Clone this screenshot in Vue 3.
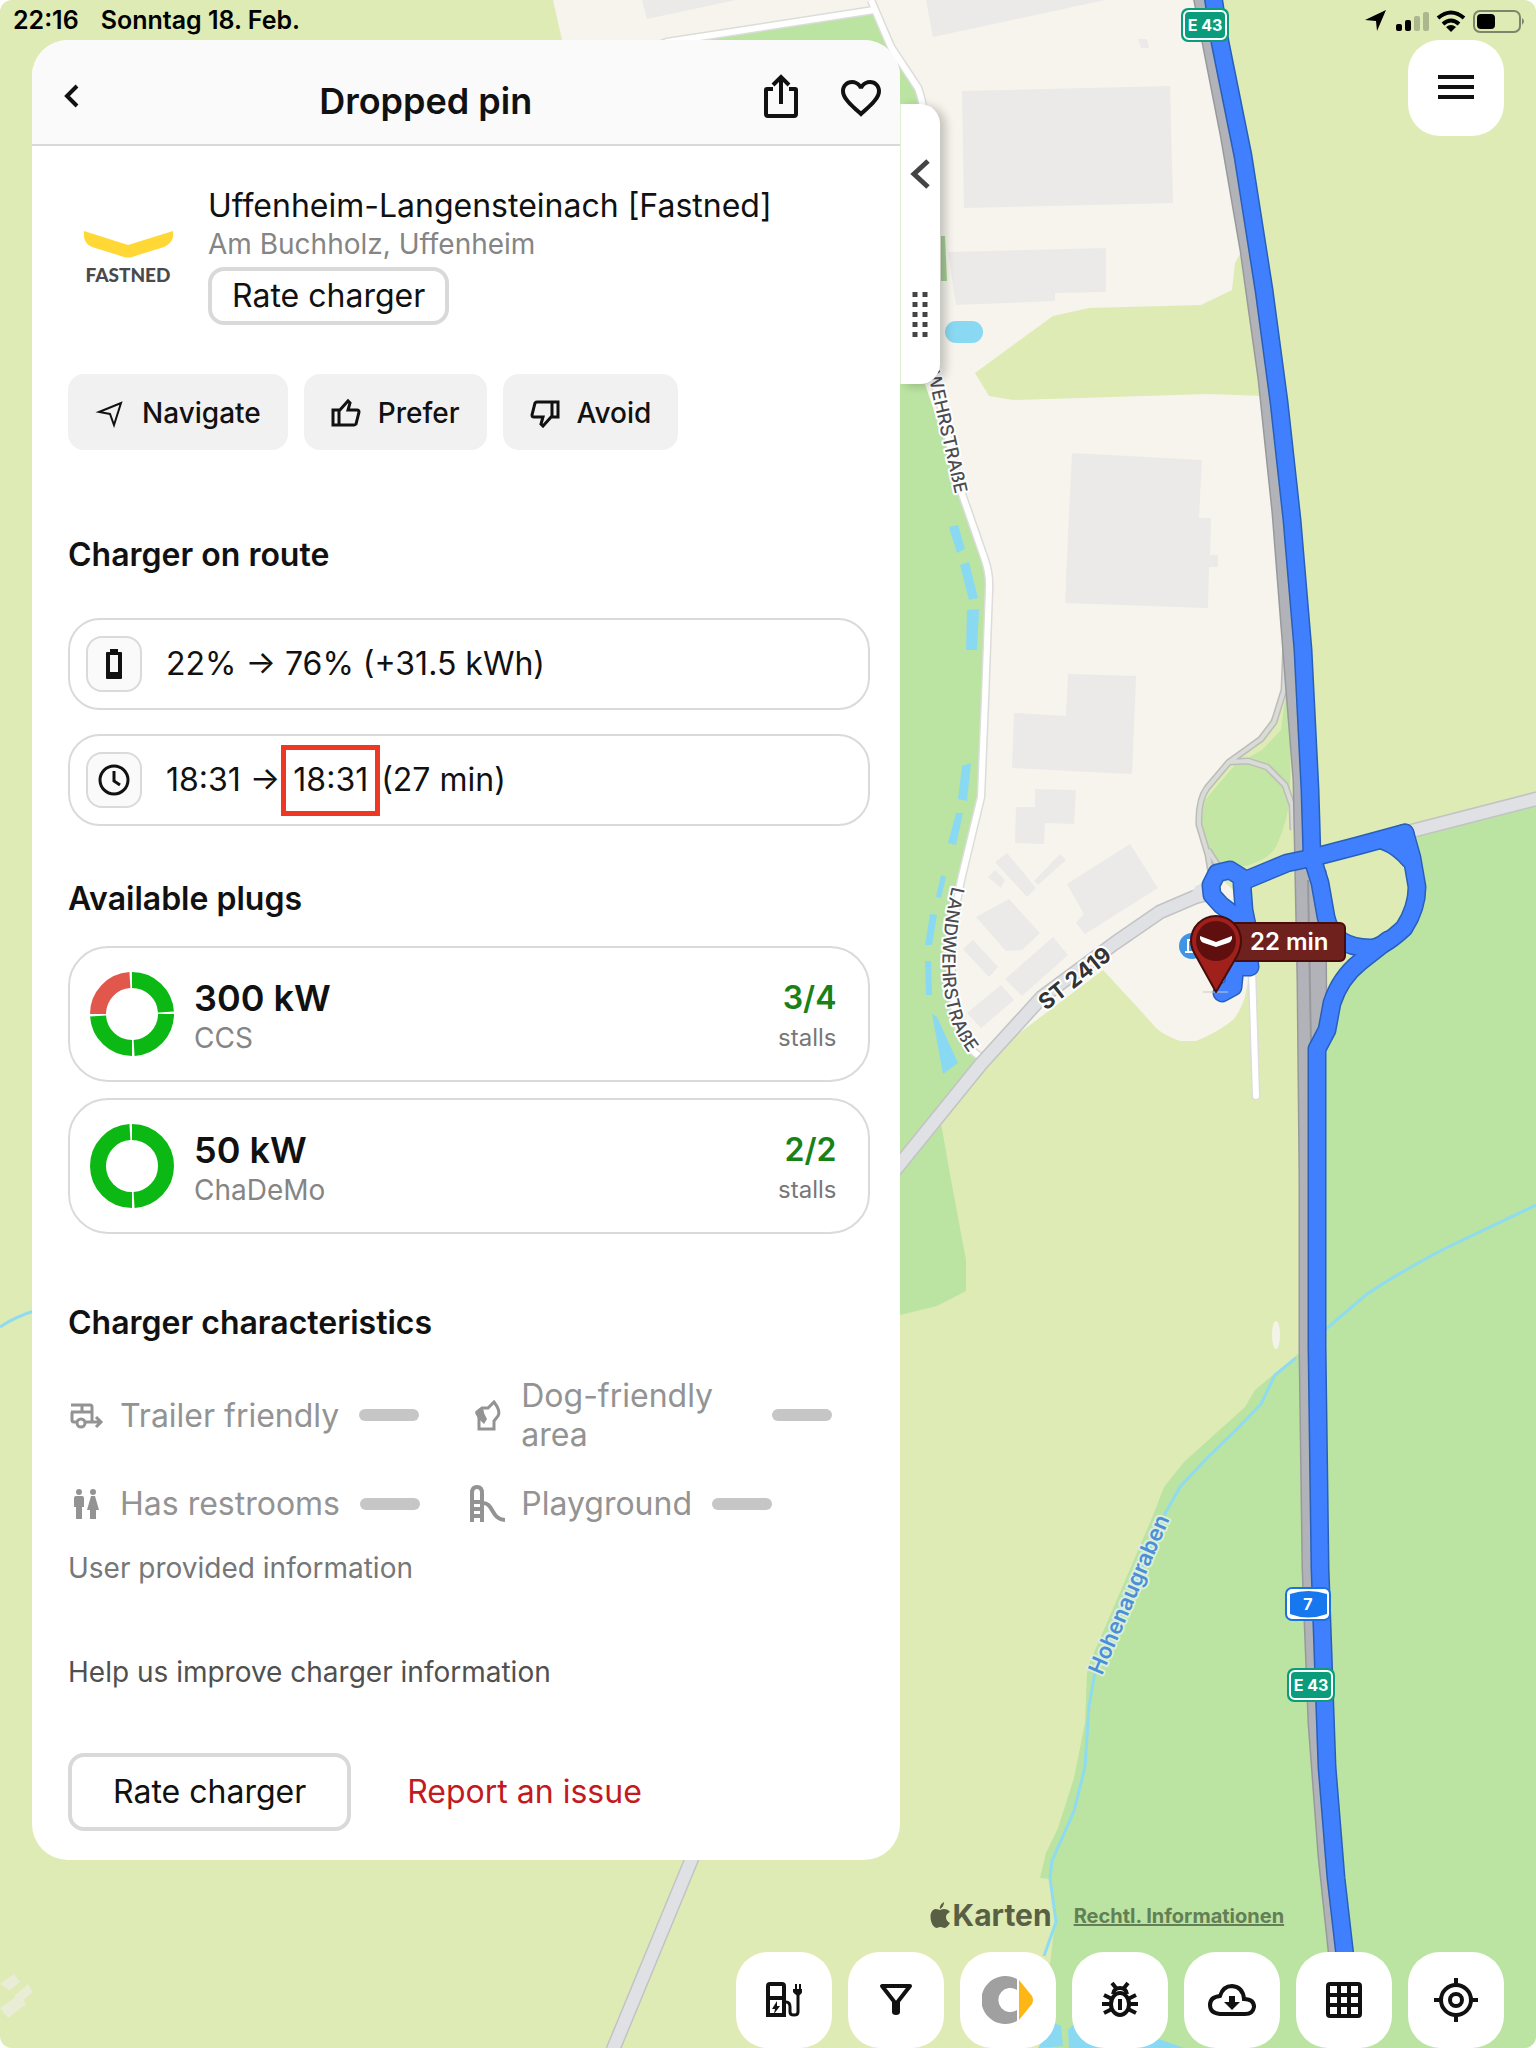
<script setup>
    import { ref } from 'vue';

    // 当前充电站
    const station = {
        name: 'Uffenheim-Langensteinach [Fastned]',
        address: 'Am Buchholz, Uffenheim'
    }

    // segments: true = stall is free, drawn clockwise from the top
    const plugs = [
        { power: '300 kW', type: 'CCS', segments: [true, true, true, false] },
        { power: '50 kW', type: 'ChaDeMo', segments: [true, true] }
    ]

    const features = [
        { icon: 'trailer', text: 'Trailer friendly' },
        { icon: 'dog', text: 'Dog-friendly area' },
        { icon: 'restroom', text: 'Has restrooms' },
        { icon: 'playground', text: 'Playground' }
    ]

    const tools = [
        { icon: 'charger', label: 'Chargers' },
        { icon: 'filter', label: 'Filter' },
        { icon: 'car', label: 'Vehicle' },
        { icon: 'bug', label: 'Report a bug' },
        { icon: 'cloud', label: 'Download' },
        { icon: 'grid', label: 'Layers' },
        { icon: 'locate', label: 'My location' }
    ]

    // buildings and ponds on the map, as polygon points
    const buildings = [
        '642,0 647,19 736,0',
        '926,0 933,37 1105,0',
        '962,91 1170,86 1173,203 964,208',
        '948,252 1106,248 1106,292 1055,293 1055,301 956,305',
        '1138,39 1147,39 1149,48 1141,48',
        '1072,453 1202,460 1199,518 1211,518 1210,555 1218,555 1218,567 1209,567 1208,608 1065,603 1069,513',
        '1068,674 1136,676 1132,774 1012,768 1014,713 1066,716',
        '1035,789 1076,790 1074,824 1045,823 1044,844 1015,843 1016,807 1035,807',
        '1130,844 1158,888 1085,934 1076,923 1084,914 1067,884',
        '1007,853 1036,888 1027,897 995,862',
        '1060,854 1066,860 1038,885 1034,881',
        '995,870 1005,880 1001,888 988,877',
        '1009,899 1040,933 1022,950 1006,951 976,917',
        '973,940 998,967 989,977 963,949',
        '1053,937 1068,955 1022,996 1005,979',
        '1001,985 1014,1000 981,1028 967,1013'
    ]
    const ponds = [
        '949,527 958,525 965,549 957,553',
        '960,565 969,562 978,598 969,600',
        '967,610 979,609 977,650 966,650',
        '962,766 971,763 967,801 958,799',
        '956,813 963,813 956,845 948,843',
        '941,875 946,877 941,898 936,897',
        '930,914 937,915 932,945 925,945',
        '925,961 931,961 932,995 926,995',
        '932,1014 937,1017 958,1063 943,1074',
        '1038,2048 1054,2023 1061,2026 1063,2046',
        '1069,2048 1068,2030 1074,2024 1150,2036 1184,2048'
    ]
    const routePath = 'M1213 -4 L1220 42 L1243 156 L1264 290 L1279 402 L1292 520 L1303 650 L1310 790 L1312 857 L1320 883 L1326 917 C1330 936 1345 948 1370 948 C1378 948 1388 943 1404 928 Q1417 908 1417 887 L1412 858 L1405 833 L1357 846 L1311 858 L1287 863 L1246 880 L1230 870 L1217 873 L1211 885 L1212 895 L1221 905 L1238 918 L1247 942 L1250 967 L1235 967 L1233 987 L1222 993'
    const loopPath = 'M1242 884 L1244 910 L1250 940'
    const cornerPath = 'M1405 833 L1384 841 Q1398 846 1410 860'
    const exitPath = 'M1388 940 L1360 962 Q1340 978 1332 1003 L1327 1030 L1317 1049 L1317 1346 L1320 1568 L1327 1767 L1336 1878 L1346 1965'
    const routes = [routePath, loopPath, cornerPath, exitPath]

    const liked = ref(false)

    function freeStalls(plug) {
        return plug.segments.filter(s => s).length
    }
    // 圆环分段：圆周按 100 计算，每段之间留 1 的间隔
    function segmentDash(plug) {
        const len = 100 / plug.segments.length
        return `${len - 1} ${101 - len}`
    }
</script>

<template>
    <div class="screen">
        <svg class="map" viewBox="0 0 1536 2048" preserveAspectRatio="xMaxYMin slice" aria-hidden="true">
            <rect width="1536" height="2048" fill="#deebb5"/>
            <!-- built-up area -->
            <path d="M553 0H1198L1208 42L1225 134L1245 250L1263 379L1277 513L1288 640L1284 695L1261 737L1229 760L1204 790L1198 817L1208 847L1216 875L1245 900L1252 960L1245 997Q1240 1012 1233 1020Q1215 1034 1196 1041H1180Q1165 1036 1156 1028L1140 1010L1103 970L981 1062L900 1000V104L562 40Z" fill="#f6f4ec"/>
            <path d="M1240 254L1235 263L1232 290L1201 305L1089 308L1053 316L975 373L989 396L1013 400L1208 394L1264 396Z" fill="#deebb5"/>
            <!-- woods and meadows -->
            <path d="M667 40L873 8L924 104L925 384L961 491L989 585L985 700L981 797L961 880L951 940L953 1005L965 1040L981 1057L941 1123L951 1180L966 1260V1291L937 1306L900 1315L860 1320V300L700 60Z" fill="#bbe3a1"/>
            <path d="M941 236H945L947 281H941Z" fill="#a5d195"/>
            <path d="M1286 690L1281 730L1262 750L1235 765L1205 800L1199 830L1212 865L1240 867Q1268 862 1277 845Q1288 820 1290 795L1291 690Z" fill="#c3e6a5"/>
            <path d="M1412 838L1536 806V2048H1040L1055 1922L1050 1879L1040 1878L1046 1853L1058 1828L1074 1778L1085 1723L1087 1673L1090 1662L1152 1518L1164 1487L1184 1462L1245 1407L1255 1390L1298 1354L1317 1340V1050L1345 985L1400 940L1420 890Z" fill="#bbe3a1"/>
            <ellipse cx="1276" cy="1335" rx="4" ry="14" fill="#f4f3ea"/>
            <path d="M0 1984l14-10 6 8-10 8zM14 1996l14-12 5 8-12 10zM0 2008l20-14 6 10-18 14z" fill="#e9edd6"/>
            <polygon v-for="(item,index) in buildings" :key="index" :points="item" fill="#ebeae8"/>
            <polygon v-for="(item,index) in ponds" :key="'p' + index" :points="item" fill="#8ad9f3"/>
            <rect x="945" y="321" width="38" height="22" rx="11" fill="#8ad9f3"/>
            <!-- streams -->
            <g fill="none" stroke="#8fdcf0" stroke-width="3">
                <path d="M0 1327Q14 1317 40 1309"/>
                <path d="M1296 1358L1275 1375L1261 1404L1237 1429L1208 1457L1180 1487L1166 1512L1095 1673L1089 1706L1085 1767L1074 1811L1052 1861L1050 1878L1056 1922L1044 1956"/>
                <path d="M1326 1329L1367 1294Q1400 1272 1444 1249L1536 1205"/>
            </g>
            <!-- minor roads -->
            <g fill="none" stroke-linejoin="round">
                <path d="M640 52L667 42L874 10M871 0L876 12L891 47L918 88Q926 110 928 150L934 380L961 491L985 560Q990 575 989 590L985 700L981 797L961 880Q946 950 955 1013Q960 1045 981 1057" stroke="#dcdcda" stroke-width="9"/>
                <path d="M640 52L667 42L874 10M871 0L876 12L891 47L918 88Q926 110 928 150L934 380L961 491L985 560Q990 575 989 590L985 700L981 797L961 880Q946 950 955 1013Q960 1045 981 1057" stroke="#fff" stroke-width="6"/>
                <path d="M1252 970L1256 1096" stroke="#dcdcda" stroke-width="9" stroke-linecap="round"/>
                <path d="M1252 970L1256 1096" stroke="#fff" stroke-width="6" stroke-linecap="round"/>
                <path d="M1286 640L1284 690L1274 722L1261 739L1229 762L1207 788Q1198 800 1199 825L1208 855L1212 880M1229 762L1248 761L1267 767L1285 785L1292 805L1293 830M1208 850L1222 872" stroke="#bcbcba" stroke-width="7"/>
                <path d="M1286 640L1284 690L1274 722L1261 739L1229 762L1207 788Q1198 800 1199 825L1208 855L1212 880M1229 762L1248 761L1267 767L1285 785L1292 805L1293 830M1208 850L1222 872" stroke="#d9dbd6" stroke-width="4"/>
                <path d="M880 1188L900 1164L981 1064L1042 997L1115 943L1160 912L1195 897L1215 892M1400 834L1540 798M693 1856L612 2052" stroke="#c2c3c4" stroke-width="15"/>
                <path d="M880 1188L900 1164L981 1064L1042 997L1115 943L1160 912L1195 897L1215 892M1400 834L1540 798M693 1856L612 2052" stroke="#e0e1e4" stroke-width="12"/>
                <path d="M1188 898L1196 886L1214 878L1216 900Z" fill="#e0e1e4"/>
                <!-- motorway -->
                <path d="M1202 -4L1211 42L1229 134L1249 250L1267 379L1281 513L1294 680L1302 780L1306 980L1308 1180V1350L1311 1568L1317 1723L1327 1856L1338 1960M1317 870L1318 1045" stroke="#98999d" stroke-width="19"/>
                <path d="M1202 -4L1211 42L1229 134L1249 250L1267 379L1281 513L1294 680L1302 780L1306 980L1308 1180V1350L1311 1568L1317 1723L1327 1856L1338 1960M1317 870L1318 1045" stroke="#b2b3b8" stroke-width="16"/>
                <path d="M1308 880L1311 1045" stroke="#97989c" stroke-width="2"/>
            </g>
            <!-- planned route -->
            <g fill="none" stroke-linejoin="round" stroke-linecap="round">
                <path v-for="(d,index) in routes" :key="'c' + index" :d="d" stroke="#285fb9" stroke-width="19"/>
                <path v-for="(d,index) in routes" :key="'r' + index" :d="d" stroke="#4080ff" stroke-width="16"/>
            </g>
            <!-- street names -->
            <path id="street1" d="M902 296L930 384L961 520" fill="none"/>
            <path id="street2" d="M952 886Q935 960 948 1010Q954 1036 976 1062" fill="none"/>
            <path id="street3" d="M1046 1011L1124 949" fill="none"/>
            <path id="stream" d="M1102 1676L1178 1500" fill="none"/>
            <g class="names">
                <text class="street"><textPath href="#street1" startOffset="32">LANDWEHRSTRAßE</textPath></text>
                <text class="street"><textPath href="#street2">LANDWEHRSTRAßE</textPath></text>
                <text class="road"><textPath href="#street3">ST 2419</textPath></text>
                <text class="water"><textPath href="#stream">Hohenaugraben</textPath></text>
            </g>
            <!-- road shields -->
            <g class="shield">
                <rect x="1181" y="8" width="48" height="34" rx="7" fill="#0b9d7b"/>
                <rect x="1184" y="11" width="42" height="28" rx="5" fill="none" stroke="#fff" stroke-width="2"/>
                <text x="1205" y="31">E 43</text>
                <rect x="1287" y="1668" width="48" height="34" rx="7" fill="#0b9d7b"/>
                <rect x="1290" y="1671" width="42" height="28" rx="5" fill="none" stroke="#fff" stroke-width="2"/>
                <text x="1311" y="1691">E 43</text>
                <rect x="1285" y="1587" width="46" height="34" rx="7" fill="#1a73e0"/>
                <rect x="1287" y="1589" width="42" height="30" rx="5" fill="#fff"/>
                <path d="M1290 1594Q1308 1588 1327 1594V1614Q1308 1621 1290 1614Z" fill="#1677ee"/>
                <text x="1308" y="1610">7</text>
            </g>
            <!-- charger pin -->
            <circle cx="1192" cy="946" r="13" fill="#3f94e6"/>
            <path d="M1187 940H1194M1188 941V951M1185 952H1194" stroke="#fff" stroke-width="2"/>
            <path d="M1203 992H1228" stroke="#c9c7c2" stroke-width="1"/>
            <rect x="1220" y="923" width="125" height="38" rx="5" fill="#6f211d" stroke="#470c0b" stroke-width="2"/>
            <path d="M1216 992L1196 956Q1191 948 1191 941A25 25 0 0 1 1241 941Q1241 948 1237 956Z" fill="#a0201b" stroke="#470c0b" stroke-width="2" stroke-linejoin="round"/>
            <circle cx="1216" cy="941" r="20" fill="#5f100e"/>
            <path d="M1200 936L1216 942L1232 936V939Q1231 942 1228 943L1216 947L1204 943Q1201 942 1200 939Z" fill="#fff"/>
            <text class="eta" x="1250" y="950">22 min</text>
        </svg>

        <header class="status">
            <span>22:16</span>
            <span>Sonntag 18. Feb.</span>
            <svg class="status-icons" width="164" height="28" viewBox="0 0 164 28" aria-hidden="true">
                <path d="M1 14L22 4L13 25L12 15Z"/>
                <rect x="32" y="18" width="6" height="7" rx="2"/>
                <rect x="41" y="14" width="6" height="11" rx="2"/>
                <rect x="50" y="10" width="6" height="15" rx="2" opacity=".22"/>
                <rect x="59" y="6" width="6" height="19" rx="2" opacity=".22"/>
                <g fill="none" stroke="#000" stroke-width="4">
                    <path d="M74 12Q87 1 100 12"/>
                    <path d="M79 18Q87 11 95 18"/>
                </g>
                <path d="M87 26L82 21Q87 17 92 21Z"/>
                <rect x="110" y="5" width="46" height="21" rx="6" fill="none" stroke="#7d8668" stroke-width="2"/>
                <rect x="113" y="8" width="18" height="15" rx="4"/>
                <path d="M158 12Q162 15 158 19Z" fill="#7d8668"/>
            </svg>
        </header>

        <div class="stage">
            <main class="panel">
                <div class="panel-head">
                    <button aria-label="Back">
                        <svg width="30" height="28" viewBox="0 0 30 28"><path d="M17 4L7 14L17 24" fill="none" stroke="#111" stroke-width="4"/></svg>
                    </button>
                    <h1>Dropped pin</h1>
                    <button class="share" aria-label="Share">
                        <svg width="40" height="48" viewBox="0 0 40 48" fill="none" stroke="#111" stroke-width="4">
                            <path d="M12 17H6Q5 17 5 18V42Q5 44 7 44H33Q35 44 35 42V18Q35 17 34 17H28"/>
                            <path d="M20 32V6M12 13L20 5L28 13"/>
                        </svg>
                    </button>
                    <button aria-label="Favourite" :aria-pressed="liked" @click="liked = !liked">
                        <svg width="48" height="48" viewBox="0 0 24 24"><path d="M12.1 18.55L12 18.65L11.89 18.55C7.14 14.24 4 11.39 4 8.5C4 6.5 5.5 5 7.5 5C9.04 5 10.54 6 11.07 7.36H12.93C13.46 6 14.96 5 16.5 5C18.5 5 20 6.5 20 8.5C20 11.39 16.86 14.24 12.1 18.55M16.5 3C14.76 3 13.09 3.81 12 5.08C10.91 3.81 9.24 3 7.5 3C4.42 3 2 5.41 2 8.5C2 12.27 5.4 15.36 10.55 20.03L12 21.35L13.45 20.03C18.6 15.36 22 12.27 22 8.5C22 5.41 19.58 3 16.5 3Z" transform="translate(0 1)" fill="#111"/></svg>
                    </button>
                </div>

                <div class="panel-body">
                    <section class="station">
                        <div class="brand">
                            <svg width="92" height="30" viewBox="0 0 92 30" aria-hidden="true"><path d="M2 1L46 15L91 1V7Q90 13 82 17L53 26Q46 29 39 26L10 17Q3 14 2 7Z" fill="#ffd836"/></svg>
                            <span>FASTNED</span>
                        </div>
                        <div>
                            <h2>{{station.name}}</h2>
                            <p class="address">{{station.address}}</p>
                            <button class="outlined small">Rate charger</button>
                        </div>
                    </section>

                    <div class="actions">
                        <button class="action">
                            <svg width="30" height="30" viewBox="0 0 30 30"><path d="M4 14L26 5L19 27L15 16Z" fill="none" stroke="#111" stroke-width="2"/></svg>
                            Navigate
                        </button>
                        <button class="action">
                            <svg width="30" height="30" viewBox="0 0 30 30" fill="none" stroke="#111" stroke-width="3"><path d="M2 12H8V27H2ZM8 13L17 3L19 5L17 12H26Q28 12 28 14L25 26Q24 27 23 27H8"/></svg>
                            Prefer
                        </button>
                        <button class="action">
                            <svg width="30" height="30" viewBox="0 0 30 30" fill="none" stroke="#111" stroke-width="3"><path d="M28 19H22V4H28ZM22 18L13 28L11 26L13 19H4Q2 19 2 17L5 5Q6 4 7 4H22"/></svg>
                            Avoid
                        </button>
                    </div>

                    <section class="on-route">
                        <h3>Charger on route</h3>
                        <div class="info">
                            <span class="badge">
                                <svg width="28" height="34" viewBox="0 0 28 34"><path d="M10 2H18V5H21Q22 5 22 6V31Q22 32 21 32H7Q6 32 6 31V6Q6 5 7 5H10ZM10 8V25H18V8Z" fill="#111" fill-rule="evenodd"/></svg>
                            </span>
                            <span>22% → 76% (+31.5 kWh)</span>
                        </div>
                        <div class="info">
                            <span class="badge">
                                <svg width="34" height="34" viewBox="0 0 34 34" fill="none" stroke="#111" stroke-width="3"><circle cx="17" cy="17" r="14"/><path d="M17 8V18L23 22"/></svg>
                            </span>
                            <span>18:31 → <span class="marked">18:31</span> (27 min)</span>
                        </div>
                    </section>

                    <section class="plugs">
                        <h3>Available plugs</h3>
                        <div v-for="plug in plugs" :key="plug.type" class="plug">
                            <svg width="84" height="84" viewBox="0 0 84 84" aria-hidden="true">
                                <circle v-for="(free,index) in plug.segments" :key="index" cx="42" cy="42" r="34" fill="none"
                                    :stroke="free ? '#0cb814' : '#e2574c'" stroke-width="16" pathLength="100"
                                    :stroke-dasharray="segmentDash(plug)" :stroke-dashoffset="-index * 100 / plug.segments.length"
                                    transform="rotate(-90 42 42)"/>
                            </svg>
                            <div class="plug-name">
                                <strong>{{plug.power}}</strong>
                                <span>{{plug.type}}</span>
                            </div>
                            <div class="stalls">
                                <strong>{{freeStalls(plug)}}/{{plug.segments.length}}</strong>
                                <span>stalls</span>
                            </div>
                        </div>
                    </section>

                    <section class="features">
                        <h3>Charger characteristics</h3>
                        <ul>
                            <li v-for="item in features" :key="item.icon">
                                <svg width="36" height="38" viewBox="0 0 36 38" fill="none" stroke="#939393" stroke-width="3">
                                    <path v-if="item.icon === 'trailer'" d="M3 9H22Q24 9 24 11V26H17M3 16H24M14 9V16M4 16V24Q4 26 6 26H9M17 27A4 4 0 1 1 9 27A4 4 0 1 1 17 27M24 26H32M28 21L33 26L28 31"/>
                                    <g v-else-if="item.icon === 'dog'">
                                        <path d="M10 33V21L8 16L13 12H19L25 6Q32 15 29 20L25 25V33Z"/>
                                        <path d="M6 17L11 12Q15 12 15 17L18 23L15 28L9 22Z" fill="#939393" stroke="none"/>
                                    </g>
                                    <path v-else-if="item.icon === 'restroom'" d="M8 7a3 3 0 1 1 6 0a3 3 0 1 1-6 0M22 7a3 3 0 1 1 6 0a3 3 0 1 1-6 0M8 11H14Q16 11 16 13V22H14V34H8V22H6V13Q6 11 8 11M23 11H27L31 25H28V34H22V25H19Z" fill="#939393" stroke="none"/>
                                    <path v-else stroke-width="4" d="M3 37V8Q3 2 8 2Q13 2 13 8V37M3 17H13M3 24H13M3 31H13M13 18C25 17 21 34 36 35"/>
                                </svg>
                                <span>{{item.text}}</span>
                                <i class="dash"></i>
                            </li>
                        </ul>
                        <p class="source">User provided information</p>
                    </section>

                    <section class="feedback">
                        <p>Help us improve charger information</p>
                        <div class="feedback-row">
                            <button class="outlined">Rate charger</button>
                            <button class="report">Report an issue</button>
                        </div>
                    </section>
                </div>

                <button class="handle" aria-label="Collapse panel">
                    <svg width="24" height="32" viewBox="0 0 24 32"><path d="M20 3L6 16L20 29" fill="none" stroke="#444" stroke-width="5"/></svg>
                    <svg width="16" height="46" viewBox="0 0 16 46"><path d="M3 0V46M13 0V46" stroke="#444" stroke-width="5" stroke-dasharray="5 5"/></svg>
                </button>
            </main>

            <button class="tool menu" aria-label="Menu">
                <svg width="36" height="26" viewBox="0 0 36 26"><path d="M0 3H36M0 13H36M0 23H36" stroke="#111" stroke-width="4"/></svg>
            </button>
        </div>

        <footer>
            <div class="credits">
                <span class="maps">
                    <svg width="21" height="26" viewBox="0 0 21 26" aria-hidden="true"><path d="M14 0Q14 5 10 7Q9 3 14 0M10 8Q12 7 14 7Q18 7 20 10Q16 12 16 15Q16 19 20 21Q17 26 14 26Q12 25 10 25Q9 25 7 26Q3 26 1 19Q-1 9 5 7Q7 7 10 8Z" fill="#585f45"/></svg>
                    Karten
                </span>
                <a href="#">Rechtl. Informationen</a>
            </div>
            <nav class="toolbar">
                <button v-for="tool in tools" :key="tool.icon" class="tool" :aria-label="tool.label">
                    <svg width="52" height="52" viewBox="0 0 52 52" fill="none" stroke="#111" stroke-width="4">
                        <g v-if="tool.icon === 'charger'">
                            <path d="M10 41V12Q10 10 12 10H24Q26 10 26 12V41M9 24H27M8 41H28"/>
                            <path d="M28 28Q32 28 32 33V38Q32 41 36 41Q40 41 40 38V20" stroke-width="3"/>
                            <path d="M19 27L14 35H17L16 40L22 32H19ZM35 15H37V10H39V15H41V10H43V15H44V18Q44 20 40 22Q36 20 35 18Z" fill="#111" stroke="none"/>
                        </g>
                        <g v-else-if="tool.icon === 'filter'">
                            <path d="M12 12H40L26 30Z" stroke-linejoin="round"/>
                            <path d="M22 27H30V38Q30 41 26 41Q22 41 22 38Z" fill="#111" stroke="none"/>
                        </g>
                        <g v-else-if="tool.icon === 'car'" stroke="none">
                            <path d="M35 5A24 24 0 1 0 35 47V36A12 12 0 1 1 35 16Z" fill="#a0a0a0"/>
                            <path d="M37 6L50 22Q52 26 50 30L37 46Z" fill="#fdb614"/>
                        </g>
                        <g v-else-if="tool.icon === 'bug'">
                            <ellipse cx="26" cy="30" rx="9" ry="11"/>
                            <path d="M19 20Q20 14 26 14Q32 14 33 20M18 9L22 14M34 9L30 14M8 30H16M36 30H44M10 21L18 25M42 21L34 25M10 39L18 35M42 39L34 35M26 25V36"/>
                        </g>
                        <g v-else-if="tool.icon === 'cloud'">
                            <path d="M14 40Q4 39 4 31Q4 23 14 22Q17 12 26 12Q37 13 38 25Q48 25 48 33Q47 40 39 40Z"/>
                            <path d="M23 22H29V28H34L26 36L18 28H23Z" fill="#111" stroke="none"/>
                        </g>
                        <path v-else-if="tool.icon === 'grid'" d="M12 10H40Q42 10 42 12V40Q42 42 40 42H12Q10 42 10 40V12Q10 10 12 10M10 21H42M10 31H42M21 10V42M31 10V42"/>
                        <g v-else>
                            <circle cx="26" cy="26" r="15"/>
                            <circle cx="26" cy="26" r="6"/>
                            <path d="M26 4V12M26 40V48M4 26H12M40 26H48"/>
                        </g>
                    </svg>
                </button>
            </nav>
        </footer>
    </div>
</template>

<style>
    body{
        margin: 0;
        background: #fff;
    }
</style>

<style scoped>
    .screen{
        position: relative;
        display: flex;
        flex-direction: column;
        min-height: 100vh;
        overflow: hidden;
        border-radius: 12px;
        color: #111;
        font-family: Inter, "Liberation Sans", sans-serif;
        font-size: 32px;
        line-height: 40px;
    }
    .map{
        position: absolute;/* 地图铺在最底层 */
        inset: 0;
        width: 100%;
        height: 100%;
    }
    .names text{
        stroke: #fff;
        stroke-width: 4px;
        stroke-linejoin: round;
        paint-order: stroke;
    }
    .names .street{
        fill: #4c4c50;
        font-size: 18px;
        font-weight: 500;
    }
    .names .road{
        fill: #333;
        font-size: 22px;
        font-weight: 700;
    }
    .names .water{
        fill: #4d8fd6;
        stroke: #d9efdc;
        font-size: 22px;
        font-weight: 600;
    }
    .shield text{
        fill: #fff;
        font-size: 16px;
        font-weight: 700;
        text-anchor: middle;
    }
    .eta{
        fill: #fff;
        font-size: 24px;
        font-weight: 600;
    }
    button{
        margin: 0;
        border: 0;
        padding: 0;
        background: none;
        color: inherit;
        font: inherit;
        cursor: pointer;
    }
    svg{
        display: block;
        flex: none;
    }
    h1,h2,h3,p,ul{
        margin: 0;
        padding: 0;
    }
    .status{
        position: relative;
        display: flex;
        align-items: center;
        gap: 22px;
        height: 40px;
        padding: 0 8px 0 13px;
        color: #000;
        font-size: 25px;
        font-weight: 600;
    }
    .status-icons{
        margin-left: auto;
    }
    .stage{
        position: relative;
        display: flex;
        align-items: flex-start;
        justify-content: space-between;
        padding: 0 32px;
    }
    .panel{
        position: relative;
        width: 59%;
        border-radius: 36px;
        background: #fff;
    }
    .panel-head{
        display: flex;
        align-items: center;
        height: 96px;
        padding: 8px 15px 0 28px;
        border-bottom: 2px solid #d9d9d9;
        border-radius: 36px 36px 0 0;
        background: #fafafa;
    }
    h1{
        flex: 1;
        padding-top: 9px;
        text-align: center;
        font-size: 36px;
        font-weight: 600;
    }
    .share{
        margin-right: 36px;
    }
    .panel-body{
        padding: 40px 30px 29px 36px;
    }
    .station{
        display: flex;
        gap: 34px;
        padding-left: 14px;
    }
    .brand{
        display: flex;
        flex-direction: column;
        align-items: center;
        width: 92px;
        padding-top: 44px;
        color: #4a4a4a;
        font-family: Lato, sans-serif;
        font-size: 19px;
        font-weight: 900;
    }
    .brand span{
        line-height: 30px;
    }
    h2{
        font-size: 32px;
        font-weight: 400;
    }
    .address{
        color: #858585;
        font-size: 28px;
        line-height: 36px;
    }
    .outlined{
        height: 78px;
        padding: 0 41px;
        border: 4px solid #d9d9d9;
        border-radius: 16px;
        background: #fff;
    }
    .outlined.small{
        height: 58px;
        margin-top: 5px;
        padding: 0 20px;
    }
    .actions{
        display: flex;
        gap: 16px;
        margin-top: 49px;
    }
    .action{
        display: flex;
        align-items: center;
        gap: 17px;
        height: 76px;
        padding: 1px 27px 0;
        border-radius: 16px;
        background: #f1f1f1;
        font-size: 28px;
        font-weight: 500;
    }
    h3{
        font-size: 32px;
        font-weight: 600;
    }
    .on-route{
        display: flex;
        flex-direction: column;
        gap: 24px;
        margin-top: 85px;
    }
    .on-route h3{
        margin-bottom: 19px;
    }
    .info{
        display: flex;
        align-items: center;
        gap: 24px;
        height: 88px;
        padding: 0 16px;
        border: 2px solid #dadada;
        border-radius: 32px;
    }
    .badge{
        display: flex;
        align-items: center;
        justify-content: center;
        width: 52px;
        height: 52px;
        border: 2px solid #dadada;
        border-radius: 16px;
        background: #fafafa;
    }
    .marked{
        position: relative;
        margin: 0 4px;
    }
    .marked::after{
        content: "";
        position: absolute;
        inset: -15px -12px -17px;
        border: 5px solid #ee3823;
    }
    .plugs{
        display: flex;
        flex-direction: column;
        gap: 16px;
        margin-top: 53px;
    }
    .plugs h3{
        margin-bottom: 11px;
    }
    .plug{
        display: flex;
        align-items: center;
        gap: 20px;
        height: 132px;
        padding: 0 32px 0 20px;
        border: 2px solid #dadada;
        border-radius: 40px;
    }
    .plug-name,.stalls{
        display: flex;
        flex-direction: column;
        padding-top: 8px;
    }
    .plug-name strong{
        font-size: 36px;
        font-weight: 600;
    }
    .plug-name span{
        color: #858585;
        font-size: 28px;
    }
    .stalls{
        margin-left: auto;
        text-align: right;
    }
    .stalls strong{
        color: #188218;
        font-weight: 600;
    }
    .stalls span{
        color: #777;
        font-size: 24px;
    }
    .features{
        margin-top: 69px;
    }
    .features ul{
        display: grid;
        grid-template-columns: 1fr 1fr;
        gap: 30px 0;
        margin-top: 33px;
        list-style: none;
    }
    .features li{
        display: flex;
        align-items: center;
        gap: 16px;
        padding-right: 38px;
        color: #939393;
        line-height: 39px;
    }
    .dash{
        flex: none;
        width: 60px;
        height: 12px;
        margin-left: 4px;
        border-radius: 6px;
        background: #c6c6c6;
    }
    .source{
        margin-top: 27px;
        color: #777;
        font-size: 28px;
        line-height: 36px;
    }
    .feedback{
        margin-top: 68px;
    }
    .feedback p{
        color: #505050;
        font-size: 28px;
        line-height: 36px;
    }
    .feedback-row{
        display: flex;
        align-items: center;
        gap: 56px;
        margin-top: 63px;
    }
    .report{
        color: #c21a20;
    }
    .handle{
        position: absolute;/* 面板右侧的拖动手柄 */
        top: 64px;
        left: 100%;
        display: flex;
        flex-direction: column;
        align-items: center;
        gap: 102px;
        width: 40px;
        height: 280px;
        padding-top: 54px;
        border-radius: 0 20px 20px 0;
        background: #fff;
        box-shadow: 6px 2px 10px rgba(0, 0, 0, 0.2);
        clip-path: inset(-20px -20px -20px 0);
    }
    .tool{
        display: flex;
        align-items: center;
        justify-content: center;
        width: 96px;
        height: 96px;
        border-radius: 32px;
        background: #fff;
    }
    .menu svg{
        margin-bottom: 2px;
    }
    footer{
        position: relative;
        margin-top: auto;
    }
    .credits{
        display: flex;
        align-items: center;
        gap: 22px;
        margin-left: 60%;
        padding: 0 0 16px 8px;
        color: #585f45;
    }
    .maps{
        display: flex;
        align-items: center;
        gap: 2px;
        font-size: 30px;
        font-weight: 700;
    }
    .credits a{
        padding-top: 3px;
        color: #637f55;
        font-size: 20px;
        font-weight: 700;
    }
    .toolbar{
        display: flex;
        justify-content: flex-end;
        gap: 16px;
        padding-right: 32px;
    }
</style>
